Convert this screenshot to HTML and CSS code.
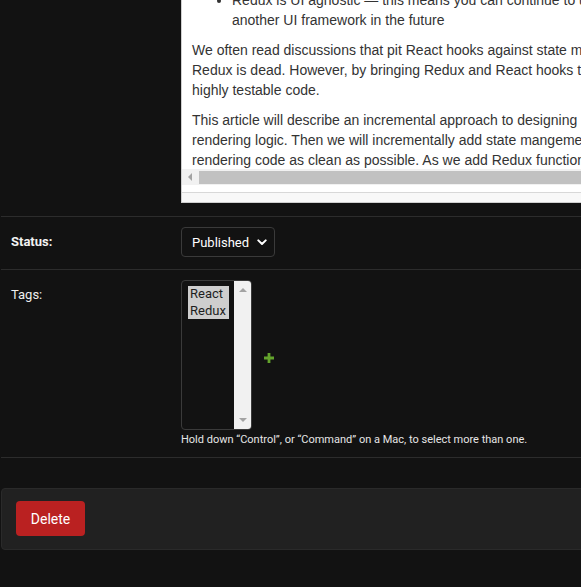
FILE: index.html
```html
<!DOCTYPE html>
<html>
<head>
<meta charset="utf-8">
<link rel="stylesheet" href="styles.css">
</head>
<body>
<div class="page">
  <div class="row row-editor">
    <div class="label"></div>
    <div class="editor">
      <div class="editor-body">
        <div class="editor-content">
          <ul>
            <li>Redux is UI agnostic — this means you can continue to use Redux if you switch to<br>another UI framework in the future</li>
          </ul>
          <p>We often read discussions that pit React hooks against state management libraries, claiming<br>Redux is dead. However, by bringing Redux and React hooks together, we can write clean,<br>highly testable code.</p>
          <p>This article will describe an incremental approach to designing a component starting with<br>rendering logic. Then we will incrementally add state mangement, keeping the<br>rendering code as clean as possible. As we add Redux functionality, we will keep tests green.</p>
        </div>
      </div>
      <div class="hscroll">
        <span class="arrow-left"></span>
        <span class="thumb"></span>
      </div>
      <div class="editor-gap"></div>
      <div class="editor-bottom"></div>
    </div>
  </div>

  <div class="row row-status">
    <div class="label label-bold">Status:</div>
    <div class="select">
      <span class="select-text">Published</span>
      <svg class="chevron" width="10" height="7" viewBox="0 0 10 7"><path d="M1.3 1.4 L5 5 L8.7 1.4" fill="none" stroke="#ffffff" stroke-width="2" stroke-linecap="round" stroke-linejoin="round"/></svg>
    </div>
  </div>

  <div class="row row-tags">
    <div class="label label-top">Tags:</div>
    <div class="tags-field">
      <div class="tags-wrap">
        <div class="multi">
          <div class="options">
            <div class="option">React</div>
            <div class="option">Redux</div>
          </div>
          <div class="vscroll">
            <span class="arrow-up"></span>
            <span class="arrow-down"></span>
          </div>
        </div>
        <svg class="add" width="10" height="10" viewBox="0 0 10 10"><path d="M3.6 0 H6.4 V3.6 H10 V6.4 H6.4 V10 H3.6 V6.4 H0 V3.6 H3.6 Z" fill="#63a32c"/></svg>
      </div>
      <div class="help">Hold down “Control”, or “Command” on a Mac, to select more than one.</div>
    </div>
  </div>

  <div class="submit-row">
    <span class="delete">Delete</span>
  </div>
</div>
</body>
</html>
```
FILE: styles.css
```css
html, body {
  margin: 0;
  padding: 0;
  background: #121212;
  overflow: hidden;
}
body {
  width: 581px;
  height: 587px;
  font-family: Roboto, "Liberation Sans", sans-serif;
  color: #eeeeee;
}
.page {
  margin-left: 1px;
  width: 700px;
}
.row {
  display: flex;
  padding: 10px 10px;
  border-bottom: 1px solid #2c2c2c;
}
.label {
  width: 170px;
  flex: none;
  font-size: 13px;
  line-height: 16px;
}
.label-bold {
  font-weight: 700;
  color: #f2f2f2;
}
.row-editor {
  padding-top: 0;
  padding-bottom: 13px;
}
.editor {
  width: 500px;
  border: 1px solid #cfcfcf;
  border-top: none;
  background: #ffffff;
}
.editor-body {
  height: 169px;
  overflow: hidden;
}
.editor-content {
  margin-top: -10px;
  padding: 0 10px;
  width: 700px;
  white-space: nowrap;
  font-family: "Liberation Sans", Arial, sans-serif;
  font-size: 14px;
  line-height: 20px;
  color: #333333;
}
.editor-content ul {
  margin: 0 0 10px 0;
  padding-left: 40px;
}
.editor-content p {
  margin: 0 0 10px 0;
}
.hscroll {
  height: 16px;
  background: #f1f1f1;
  display: flex;
  align-items: center;
}
.arrow-left {
  width: 0;
  height: 0;
  margin-left: 6px;
  border-top: 4px solid transparent;
  border-bottom: 4px solid transparent;
  border-right: 4px solid #a3a3a3;
}
.thumb {
  margin-left: 7px;
  height: 13px;
  flex: 1;
  background: #c1c1c1;
}
.editor-gap {
  height: 7px;
  background: #ffffff;
  border-bottom: 1px solid #d8d8d8;
}
.editor-bottom {
  height: 9px;
  background: #f8f8f8;
}
.row-status {
  align-items: center;
  padding-bottom: 12px;
}
.select {
  display: flex;
  align-items: center;
  box-sizing: border-box;
  width: 94px;
  height: 30px;
  padding: 0 4px 0 10px;
  border: 1px solid #3a3a3a;
  border-radius: 4px;
  font-size: 13px;
  color: #ffffff;
}
.select-text {
  flex: 1;
}
.chevron {
  display: block;
  margin-right: 3px;
}
.row-tags {
  padding-top: 10px;
  padding-bottom: 11px;
}
.label-top {
  padding-top: 7px;
  color: #eeeeee;
}
.tags-wrap {
  display: flex;
  align-items: center;
}
.multi {
  box-sizing: border-box;
  width: 71px;
  height: 150px;
  border: 1px solid #3a3a3a;
  border-radius: 4px;
  display: flex;
  overflow: hidden;
}
.options {
  flex: 1;
  padding: 5px 5px 0 6px;
}
.option {
  background: #cecece;
  color: #1e1e1e;
  font-size: 13px;
  line-height: 16.5px;
  padding-left: 2px;
}
.vscroll {
  width: 17px;
  flex: none;
  background: #f1f1f1;
  display: flex;
  flex-direction: column;
  align-items: center;
  justify-content: space-between;
  padding: 7px 0 7px;
  box-sizing: border-box;
}
.arrow-up {
  width: 0;
  height: 0;
  border-left: 4px solid transparent;
  border-right: 4px solid transparent;
  border-bottom: 4px solid #a3a3a3;
}
.arrow-down {
  width: 0;
  height: 0;
  border-left: 4px solid transparent;
  border-right: 4px solid transparent;
  border-top: 4px solid #a3a3a3;
}
.add {
  display: block;
  margin-left: 12px;
  margin-top: 5px;
}
.help {
  margin-top: 3px;
  font-size: 11px;
  line-height: 13px;
  color: #e6e6e6;
}
.submit-row {
  margin-top: 30px;
  height: 62px;
  box-sizing: border-box;
  padding: 12px 14px;
  background: #212121;
  border: 1px solid #2a2a2a;
  border-radius: 4px;
  display: flex;
  align-items: flex-start;
}
.delete {
  display: flex;
  align-items: center;
  justify-content: center;
  width: 69px;
  height: 35px;
  background: #ba2121;
  border-radius: 4px;
  color: #ffffff;
  font-size: 14px;
}
```
